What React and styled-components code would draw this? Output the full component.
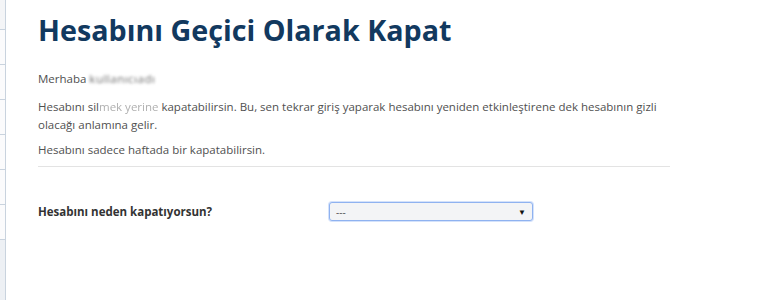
import React from "react";
import styled, { createGlobalStyle } from "styled-components";

const GlobalStyle = createGlobalStyle`
  html, body {
    margin: 0;
    padding: 0;
    background: #fff;
  }
  body {
    font-family: "Open Sans", "Liberation Sans", sans-serif;
  }
`;

const Page = styled.div`
  display: flex;
  width: 768px;
  height: 300px;
  overflow: hidden;
`;

const Rail = styled.div`
  width: 5px;
  flex: none;
  display: flex;
  flex-direction: column;
  border-right: 1px solid #c9d3de;
  background: #f6f7f9;
`;

const RailItem = styled.div`
  height: 34px;
  border-bottom: 1px solid #c9d3de;
  background: #fbfbfc;

  &:first-child {
    height: 29px;
    background: #f4f5f7;
  }
`;

const RailRest = styled.div`
  flex: 1;
  background: #edf0f4;
`;

const Main = styled.div`
  flex: 1;
  padding: 10px 0 0 32px;
`;

const Content = styled.div`
  width: 632px;
`;

const Title = styled.h1`
  margin: 0 0 20px;
  font-family: "Open Sans", sans-serif;
  font-weight: 700;
  font-size: 28.7px;
  line-height: 40px;
  color: #12395f;
`;

const Text = styled.p`
  margin: 0 0 ${(p) => p.gap || 8}px;
  font-size: 11.5px;
  line-height: 18px;
  color: #505050;
`;

const Hidden = styled.span`
  color: ${(p) => (p.dark ? "#6a6a6a" : "#b0b0b0")};
  filter: blur(${(p) => (p.dark ? 1.6 : 0.6)}px);
  letter-spacing: ${(p) => (p.dark ? "0.5px" : "0")};
`;

const Divider = styled.hr`
  margin: 0;
  border: none;
  border-top: 1px solid #e3e3e3;
`;

const Field = styled.div`
  display: flex;
  align-items: center;
  margin-top: 35px;
`;

const Label = styled.label`
  width: 291px;
  font-size: 11.5px;
  font-weight: 700;
  color: #333;
`;

const Select = styled.div`
  box-sizing: border-box;
  width: 204px;
  height: 19px;
  display: flex;
  align-items: center;
  justify-content: space-between;
  padding: 0 6px;
  border: 1px solid #8fb2f0;
  border-radius: 3px;
  background: #f3f4f6;
  box-shadow: 0 0 0 1px #d4e2fb;
  font-size: 10px;
  color: #555;
`;

const Arrow = styled.span`
  font-size: 8px;
  color: #111;
`;

export default function App() {
  return (
    <>
      <GlobalStyle />
      <Page>
        <Rail>
          {Array.from({ length: 7 }).map((_, i) => (
            <RailItem key={i} />
          ))}
          <RailRest />
        </Rail>
        <Main>
          <Content>
            <Title>Hesabını Geçici Olarak Kapat</Title>
            <Text gap={10}>
              Merhaba <Hidden dark>kullanıcıadı</Hidden>
            </Text>
            <Text gap={7}>
              Hesabını sil<Hidden>mek yerine</Hidden> kapatabilirsin. Bu, sen tekrar giriş
              yaparak hesabını yeniden etkinleştirene dek hesabının gizli olacağı anlamına gelir.
            </Text>
            <Text gap={7}>Hesabını sadece haftada bir kapatabilirsin.</Text>
            <Divider />
            <Field>
              <Label>Hesabını neden kapatıyorsun?</Label>
              <Select>
                <span>---</span>
                <Arrow>▼</Arrow>
              </Select>
            </Field>
          </Content>
        </Main>
      </Page>
    </>
  );
}
